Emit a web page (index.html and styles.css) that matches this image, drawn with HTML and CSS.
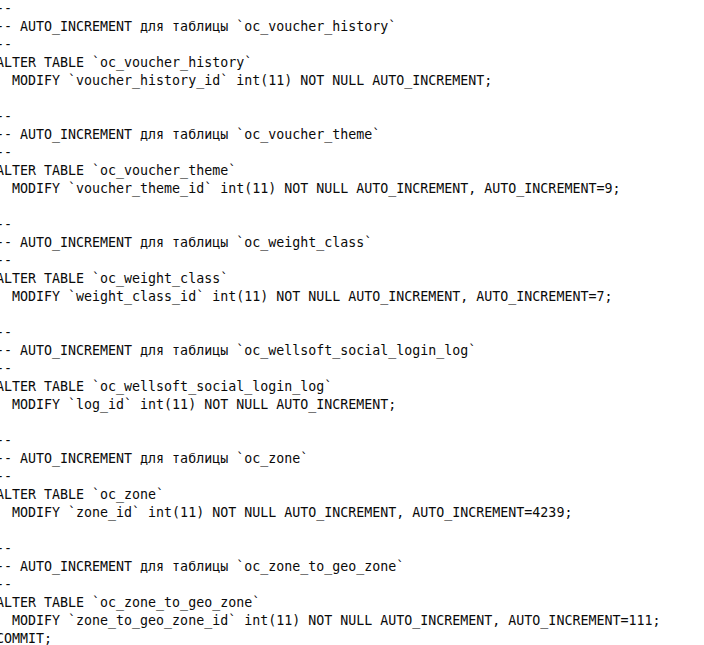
FILE: index.html
```html
<!DOCTYPE html>
<html lang="ru">
<head>
<meta charset="utf-8">
<title>SQL dump</title>
<link rel="stylesheet" href="styles.css">
</head>
<body>
<pre class="code">--
-- AUTO_INCREMENT для таблицы `oc_voucher_history`
--
ALTER TABLE `oc_voucher_history`
  MODIFY `voucher_history_id` int(11) NOT NULL AUTO_INCREMENT;

--
-- AUTO_INCREMENT для таблицы `oc_voucher_theme`
--
ALTER TABLE `oc_voucher_theme`
  MODIFY `voucher_theme_id` int(11) NOT NULL AUTO_INCREMENT, AUTO_INCREMENT=9;

--
-- AUTO_INCREMENT для таблицы `oc_weight_class`
--
ALTER TABLE `oc_weight_class`
  MODIFY `weight_class_id` int(11) NOT NULL AUTO_INCREMENT, AUTO_INCREMENT=7;

--
-- AUTO_INCREMENT для таблицы `oc_wellsoft_social_login_log`
--
ALTER TABLE `oc_wellsoft_social_login_log`
  MODIFY `log_id` int(11) NOT NULL AUTO_INCREMENT;

--
-- AUTO_INCREMENT для таблицы `oc_zone`
--
ALTER TABLE `oc_zone`
  MODIFY `zone_id` int(11) NOT NULL AUTO_INCREMENT, AUTO_INCREMENT=4239;

--
-- AUTO_INCREMENT для таблицы `oc_zone_to_geo_zone`
--
ALTER TABLE `oc_zone_to_geo_zone`
  MODIFY `zone_to_geo_zone_id` int(11) NOT NULL AUTO_INCREMENT, AUTO_INCREMENT=111;
COMMIT;</pre>
</body>
</html>
```
FILE: styles.css
```css
html, body {
  margin: 0;
  padding: 0;
  background: #ffffff;
  overflow: hidden;
}

.code {
  margin: 0 0 0 -4px;
  font-family: "DejaVu Sans Mono", "Liberation Mono", monospace;
  font-size: 13.3px;
  line-height: 18px;
  color: #0a0a0a;
  white-space: pre;
}
```
